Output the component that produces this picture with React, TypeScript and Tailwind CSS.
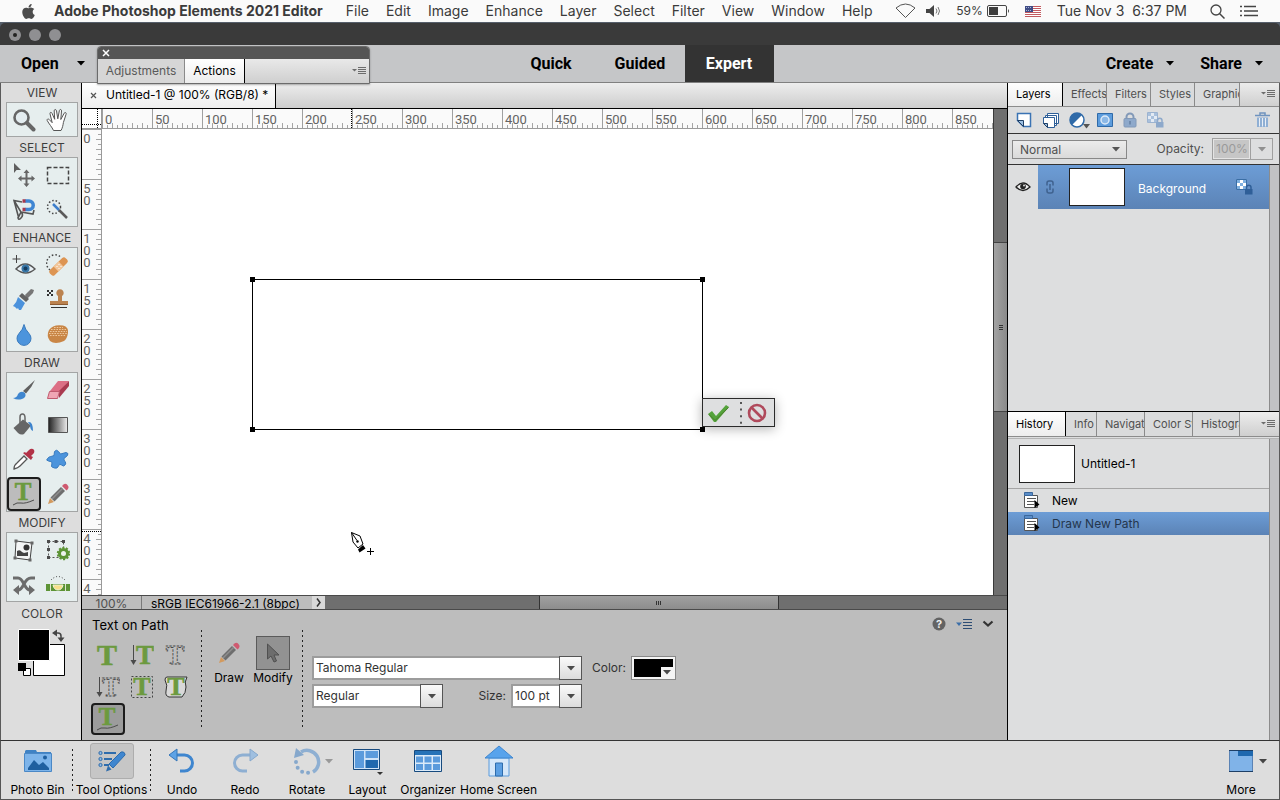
import type { ReactNode } from "react";
import { FaApple } from "react-icons/fa";

/* ---------- small shared pieces ---------- */

function Caret({ className = "text-black" }: { className?: string }) {
  return (
    <svg width="8" height="5" viewBox="0 0 8 5" className={className} aria-hidden="true">
      <path d="M0 0h8L4 4.5z" fill="currentColor" />
    </svg>
  );
}

function PanelMenuIcon({ className = "text-[#6d6d6d]" }: { className?: string }) {
  return (
    <svg width="14" height="8" viewBox="0 0 14 8" className={className} aria-hidden="true">
      <path d="M0 2h5L2.500 4.500z" fill="currentColor" />
      <path d="M6 .5h8M6 2.500h8M6 4.500h8M6 6.500h8" stroke="currentColor" />
    </svg>
  );
}

function Icon({ children, w = 24, h = 24 }: { children: ReactNode; w?: number; h?: number }) {
  return (
    <svg width={w} height={h} viewBox={`0 0 ${w} ${h}`} fill="none" aria-hidden="true">
      {children}
    </svg>
  );
}

function SerifT({ x = 12, y = 22, size = 30, outline = false }: { x?: number; y?: number; size?: number; outline?: boolean }) {
  return (
    <text
      x={x}
      y={y}
      fontSize={size}
      fontWeight="bold"
      textAnchor="middle"
      fontFamily="Liberation Serif, serif"
      fill={outline ? "none" : "#6c9a3f"}
      stroke={outline ? "#4a4a4a" : "#6c9a3f"}
      strokeWidth={outline ? 0.9 : 0.6}
      strokeDasharray={outline ? "2.500 1.200" : undefined}
    >
      T
    </text>
  );
}

const PENCIL = (
  <>
    <path d="M2 22l2-6 4 4z" fill="#d39a5e" />
    <path d="M4.500 15.500L15 5l4 4L8.500 19.500z" fill="#6e6e6e" />
    <path d="M6 17L16.500 6.500" stroke="#8e8e8e" strokeWidth="1.500" />
    <path d="M16 4l1.500-1.500q2-1.500 4 .5t.5 4L20.500 8.500z" fill="#cf5a70" />
  </>
);

const PATH_CURVE = <path d="M1 23q4-3 8-2t13-3" stroke="#4b4b4b" />;

/* ---------- toolbox ---------- */

interface Tool {
  name: string;
  icon: ReactNode;
  active?: boolean;
}

const VIEW_TOOLS: Tool[] = [
  {
    name: "Zoom",
    icon: (
      <>
        <circle cx="9.500" cy="9.500" r="7" fill="#e3ecef" stroke="#666" strokeWidth="2.600" />
        <path d="M15 15l6.500 6.500" stroke="#666" strokeWidth="4" strokeLinecap="round" />
      </>
    ),
  },
  {
    name: "Hand",
    icon: (
      <path
        d="M7.500 22.500C6 19 3 16 1.200 12.500c-.6-1.300 1-2 2-1l3 3.200L4 5.800c-.4-1.600 1.500-2 2-.5l2.700 6L8.200 2.800c0-1.700 2-1.700 2.300 0l1.300 8 1.600-8.300c.4-1.600 2.300-1.200 2.100.4l-.7 8.600 3.400-6.300c.8-1.400 2.500-.5 1.900 1l-2.700 8.300c-.4 3-1 5.500-2.400 8z"
        fill="#fff"
        stroke="#555"
      />
    ),
  },
];

const SELECT_TOOLS: Tool[] = [
  {
    name: "Move",
    icon: (
      <>
        <path d="M2 0v10l2.500-3L9 7z" fill="#5f5f5f" />
        <path
          d="M14.500 6.500l3 3.500H15.500v4.500h4V12.500L23 15.500l-3.500 3V16.500h-4v4h2l-3 3.500-3-3.500h2v-4h-4v2L6 15.500l3.500-3v2h4V10h-2z"
          fill="#666"
        />
      </>
    ),
  },
  {
    name: "Rectangular Marquee",
    icon: <path d="M1.500 4.500h21v16h-21z" stroke="#444" strokeWidth="1.500" strokeDasharray="4 2" />,
  },
  {
    name: "Lasso",
    icon: (
      <>
        <path d="M10 5L2 3.500 6.500 20 9 15l-7-11.500M9 15l12 2 1-4M9 15q3 3 0 6t-3-1" stroke="#555" strokeWidth="1.600" />
        <path d="M13 4h4a4.200 4.200 0 010 8.500h-4" stroke="#3f86d3" strokeWidth="3.500" />
        <path d="M10.500 2.200h3v3.600h-3zM10.500 10.700h3v3.600h-3z" fill="#a73a4e" />
      </>
    ),
  },
  {
    name: "Quick Selection",
    icon: (
      <>
        <circle cx="8" cy="10" r="6.500" stroke="#444" strokeWidth="1.500" strokeDasharray="1.500 2" />
        <path d="M7 7l6 6" stroke="#3f7fcb" strokeWidth="2.500" />
        <path d="M13 13l8 8" stroke="#5a5a5a" strokeWidth="2.500" />
      </>
    ),
  },
];

const ENHANCE_TOOLS: Tool[] = [
  {
    name: "Red Eye Removal",
    icon: (
      <>
        <path d="M4.500 2v8M.5 6h8" stroke="#444" />
        <path d="M4 16q9-10 19 0-9 8-19 0z" fill="#e8f0f5" stroke="#565656" strokeWidth="1.500" />
        <circle cx="13.500" cy="15.500" r="4" fill="#3777a8" />
        <circle cx="13.500" cy="15.500" r="2" fill="#163c5e" />
      </>
    ),
  },
  {
    name: "Spot Healing Brush",
    icon: (
      <>
        <path d="M4 17A7 7 0 1114 3.500" stroke="#444" strokeWidth="1.500" strokeDasharray="1.500 2" />
        <rect x="1.500" y="10" width="22" height="7" rx="2.500" transform="rotate(-44 12.500 13.500)" fill="#dd9553" />
        <rect x="9" y="10" width="7" height="7" transform="rotate(-44 12.500 13.500)" fill="#f2c69a" />
        <path d="M10.500 13.500h1M12.500 11.500h1M12.500 15.500h1M14.500 13.500h1" stroke="#fff" />
      </>
    ),
  },
  {
    name: "Smart Brush",
    icon: (
      <>
        <path d="M13 8l6-6 3 1-1 3-6 6z" fill="#777" />
        <path d="M10 6l7 6-3 3-7-6z" fill="#626262" />
        <path d="M6 10l7 6-4 7H7l-1-2-1 1-2-2-2-1q4-4 5-9z" fill="#4b92dc" />
      </>
    ),
  },
  {
    name: "Clone Stamp",
    icon: (
      <>
        <path d="M1 3h2v2H1zM5 3h2v2H5zM3 5h2v2H3zM1 7h2v2H1zM5 7h2v2H5z" fill="#333" />
        <path d="M12 9a3.700 3.700 0 114 0v5H22v4H4v-4h8z" fill="#bb8350" />
        <path d="M4 17.500h18" stroke="#8e5c33" />
        <path d="M5 20.500h16" stroke="#333" />
      </>
    ),
  },
  {
    name: "Blur",
    icon: <path d="M12 2.500q1 5 5 9a7 7 0 11-10 0q4-4 5-9z" fill="#4c94dc" stroke="#3b7bbd" />,
  },
  {
    name: "Sponge",
    icon: (
      <>
        <path d="M3 8q4-6 14-4.500 6 1.500 5 7.500-1 6-4 8-9 4-14 0-4-5-1-11z" fill="#c98646" />
        <path
          d="M5 7.500h15M4 9.500h17M3 11.500h18M4 13.500h16M8 5.500h9"
          stroke="#eec79c"
          strokeWidth="1.200"
          strokeDasharray="1.600 1.100"
        />
      </>
    ),
  },
];

const DRAW_TOOLS: Tool[] = [
  {
    name: "Brush",
    icon: (
      <>
        <path d="M23 2L11 13l3 2.500Q20 9 23 2z" fill="#616161" />
        <path d="M1 20q4 0 5-4 3-4 7-1 2 4-3 6-5 1.500-9-1z" fill="#3f86cf" />
      </>
    ),
  },
  {
    name: "Eraser",
    icon: (
      <>
        <path d="M12 3h11l-9 10H4z" fill="#dc6f85" />
        <path d="M23 3v5L13 20v-7z" fill="#a93a50" />
        <path d="M3.500 13.500h10l-2 7h-10z" fill="#f0a6b4" stroke="#c05a6e" />
      </>
    ),
  },
  {
    name: "Paint Bucket",
    icon: (
      <>
        <path d="M8 12V4q0-3 2.500-3T13 5v5" stroke="#666" strokeWidth="1.500" />
        <path d="M1.500 15L11 6.500l8 6-7 8.500q-3 1.500-6-1z" fill="#666" />
        <path d="M16 9q5-1 5 9-3-1-3-6z" fill="#3d83cd" />
      </>
    ),
  },
  {
    name: "Gradient",
    icon: (
      <>
        <defs>
          <linearGradient id="tool-gradient">
            <stop offset="0" stopColor="#222" />
            <stop offset="1" stopColor="#eee" />
          </linearGradient>
        </defs>
        <path d="M2.500 4.500h19v15h-19z" fill="url(#tool-gradient)" stroke="#555" />
      </>
    ),
  },
  {
    name: "Color Picker",
    icon: (
      <>
        <path d="M2 22q0-4 3-6l7-7 3 3-7 7q-2 2-6 3z" fill="#fff" stroke="#555" strokeWidth="1.300" />
        <path d="M11 6l8 7 2-3-2-1 3-3q1-3-1-4t-4 1l-3 3-1-1z" fill="#b23247" />
      </>
    ),
  },
  {
    name: "Custom Shape",
    icon: (
      <path
        d="M8.500 4.500q2-2.500 4 0l2 2.500 5.500-1.500q3 .5 1.500 3L18 11.500q-.5 1.500 1 3t0 3.500-3.500 0-3 1-4 2-3-1.500l.5-4q-.5-1-3.500-1.500T1.500 11.500t3-2T8 8.500z"
        fill="#4c94dc"
        stroke="#397bbf"
      />
    ),
  },
  { name: "Type", active: true, icon: <><SerifT x={11} y={18} size={25} />{PATH_CURVE}</> },
  { name: "Pencil", icon: PENCIL },
];

const MODIFY_TOOLS: Tool[] = [
  {
    name: "Crop",
    icon: (
      <>
        <path d="M4 3l16 2-2 17L3 20z" fill="#f3f5f5" stroke="#444" />
        <circle cx="14.500" cy="9.500" r="3" fill="#333" />
        <path d="M5 18v-5q3-2 5 1l2 1 4-1v4z" fill="#444" />
        <path d="M2.500 1.500h3v3h-3zM18.500 3.500h3v3h-3zM16.500 20.500h3v3h-3zM1.500 18.500h3v3h-3z" fill="#666" />
      </>
    ),
  },
  {
    name: "Recompose",
    icon: (
      <>
        <path d="M2.500 3.500h15v16h-15z" stroke="#555" strokeDasharray="2 2" />
        <path d="M1 2h3v3H1zM8.500 2h3v3h-3zM16 2h3v3h-3zM1 10h3v3H1zM1 18h3v3H1z" fill="#4b4b4b" />
        <circle cx="17.500" cy="15.500" r="5.500" stroke="#5d9436" strokeWidth="2.500" strokeDasharray="2 1.450" />
        <circle cx="17.500" cy="15.500" r="4" fill="#eef3ee" stroke="#5d9436" strokeWidth="3" />
      </>
    ),
  },
  {
    name: "Content-Aware Move",
    icon: (
      <>
        <path d="M1 6h5q3 0 6 6t6 6h1M23 6h-4q-4 0-7 6t-6 6H5" stroke="#6c6c6c" strokeWidth="3" />
        <path d="M7 13v10l-6-5zM17 13v10l6-5z" fill="#6c6c6c" />
      </>
    ),
  },
  {
    name: "Straighten",
    icon: (
      <>
        <path d="M5 8q7-7 14 0" stroke="#333" strokeDasharray="1 2" />
        <path d="M0 12h24v7H0z" fill="#5d9436" />
        <path d="M7 13h10q-1 5-5 5t-5-5z" fill="#f8df8a" stroke="#eef3d6" />
        <path d="M4.500 12v7M19.500 12v7" stroke="#dfe8cf" />
      </>
    ),
  },
];

function ToolGroup({ title, tools, className }: { title: string; tools: Tool[]; className: string }) {
  return (
    <section>
      <h2 className="h-5 w-[72px] text-center text-[12px] leading-[21px] text-[#3d3d3d]">{title}</h2>
      <div className={`grid w-[72px] auto-rows-fr grid-cols-2 border border-[#a3a5a5] bg-[#e6eeee] pr-[2px] ${className}`}>
        {tools.map((tool) => (
          <button
            key={tool.name}
            type="button"
            aria-label={tool.name}
            className={
              tool.active
                ? "flex items-center justify-center rounded-[4px] border-2 border-[#1c1c1c] bg-[#bcbcbc]"
                : "flex items-center justify-center"
            }
          >
            <Icon>{tool.icon}</Icon>
          </button>
        ))}
      </div>
    </section>
  );
}

function Toolbox() {
  return (
    <aside className="w-[82px] shrink-0 border-x border-l-[#5a5a5a] border-r-black bg-[#dddddd] pl-[5px]">
      <ToolGroup title="VIEW" tools={VIEW_TOOLS} className="h-[35px]" />
      <ToolGroup title="SELECT" tools={SELECT_TOOLS} className="h-[70px]" />
      <ToolGroup title="ENHANCE" tools={ENHANCE_TOOLS} className="h-[105px]" />
      <ToolGroup title="DRAW" tools={DRAW_TOOLS} className="h-[140px]" />
      <ToolGroup title="MODIFY" tools={MODIFY_TOOLS} className="h-[70px]" />
      <h2 className="h-6 w-[72px] text-center text-[12px] leading-[24px] text-[#3d3d3d]">COLOR</h2>
      <button type="button" aria-label="Foreground and background colors" className="ml-[11px] block pt-[2px]">
        <svg width="50" height="50" viewBox="0 0 50 50" fill="none" aria-hidden="true">
          <path d="M16.500 16.500h31v31h-31z" fill="#fff" stroke="#000" />
          <path d="M1.500 1.500h31v31h-31z" fill="#000" stroke="#fff" />
          <path d="M37 5h4q3 0 3 3v4" stroke="#444" strokeWidth="1.500" />
          <path d="M35 5l5-3.500v7zM40.500 9.500h7L44 14z" fill="#444" />
          <path d="M6.500 40.500h7v7h-7z" fill="#fff" stroke="#000" />
          <path d="M1 35h8v8H1z" fill="#000" />
        </svg>
      </button>
    </aside>
  );
}

/* ---------- menu bar and top bar ---------- */

const MENUS = ["File", "Edit", "Image", "Enhance", "Layer", "Select", "Filter", "View", "Window", "Help"];

function MenuBar() {
  return (
    <header className="flex h-[22px] shrink-0 items-center bg-[#fafafa] pr-[22px] pl-5 text-[14px] leading-[22px] text-[#3b3b3b]">
      <FaApple size={17} className="mr-[17px] text-[#4c4c4c]" />
      <span className="font-bold whitespace-nowrap">Adobe Photoshop Elements 2021 Editor</span>
      <nav className="ml-[23px] flex gap-[17px]">
        {MENUS.map((menu) => (
          <button key={menu} type="button">
            {menu}
          </button>
        ))}
      </nav>
      <div className="ml-auto flex items-center whitespace-nowrap">
        <Icon w={21} h={16}>
          <path d="M1 5q9.500-8 19 0l-9.500 9.500z" stroke="#555" />
        </Icon>
        <span className="ml-[10px] flex">
          <Icon w={14} h={14}>
            <path d="M0 5h3.500L8 1v12L3.500 9H0z" fill="#444" />
            <path d="M10 4.500q2 2.500 0 5M12 3q3 4 0 8" stroke="#777" />
          </Icon>
        </span>
        <span className="mr-[4px] ml-4 text-[12px]">59%</span>
        <Icon w={24} h={14}>
          <rect x=".5" y="1.500" width="19" height="11" rx="1.500" stroke="#444" />
          <path d="M2 3h9v8H2z" fill="#3d3d3d" />
          <path d="M21 5q2 2 0 4z" fill="#444" />
        </Icon>
        <span className="ml-[14px] flex">
          <Icon w={16} h={11}>
            <path d="M0 0h16v11H0z" fill="#fff" />
            <path d="M0 .5h16M0 2.500h16M0 4.500h16M0 6.500h16M0 8.500h16M0 10.500h16" stroke="#c25a60" />
            <path d="M0 0h8v6H0z" fill="#3f4c86" />
            <path d="M1 1.500h6M1 4.500h6" stroke="#aab0d0" strokeDasharray="1 1" />
          </Icon>
        </span>
        <span className="ml-4">Tue Nov 3&nbsp; 6:37 PM</span>
        <span className="ml-[23px] flex">
          <Icon w={15} h={15}>
            <circle cx="6" cy="6" r="5" stroke="#444" strokeWidth="1.300" />
            <path d="M9.500 9.500l5 5" stroke="#444" strokeWidth="1.500" />
          </Icon>
        </span>
        <span className="ml-[15px] flex">
          <Icon w={18} h={12}>
            <path d="M0 1.500h2M0 6h2M0 10.500h2M4 1.500h12M4 6h14M4 10.500h14" stroke="#444" strokeWidth="1.600" />
          </Icon>
        </span>
      </div>
    </header>
  );
}

const PANEL_TAB_ACTIVE = "border-r border-black bg-gradient-to-b from-white to-[#ededed] text-black";

function FloatingPanel() {
  return (
    <div className="absolute top-[1px] left-[97px] z-20 w-[273px] rounded-t-[4px] border border-[#6b6b6b] bg-[#dcdcdc] text-[12px] shadow-[0_1px_2px_rgba(0,0,0,0.3)]">
      <div className="flex h-[12px] items-center rounded-t-[3px] bg-[#555555] pl-[4px]">
        <button type="button" aria-label="Close panel">
          <Icon w={8} h={8}>
            <path d="M1 1l6 6M7 1L1 7" stroke="#fff" strokeWidth="1.500" />
          </Icon>
        </button>
      </div>
      <div className="flex h-6 items-stretch bg-gradient-to-b from-[#e9e9e9] to-[#cfcfcf]">
        <button type="button" className="w-[87px] border-r border-[#8a8a8a] bg-[#d6d6d6] text-[#5a5a5a]">
          Adjustments
        </button>
        <button type="button" className={`w-[60px] ${PANEL_TAB_ACTIVE}`}>
          Actions
        </button>
        <button type="button" aria-label="Panel menu" className="mr-[3px] ml-auto">
          <PanelMenuIcon />
        </button>
      </div>
    </div>
  );
}

function TopBar() {
  return (
    <div className="relative z-10 grid h-[37px] shrink-0 grid-cols-[1fr_auto_1fr] bg-[#c5c6c8] font-[Roboto,sans-serif] text-[16px] font-bold text-black shadow-[0_1px_0_#808080]">
      <div className="flex items-center pl-[21px]">
        <button type="button" className="flex items-center gap-[18px]">
          Open <Caret />
        </button>
      </div>
      <nav className="flex">
        <button type="button" className="w-[89px]">
          Quick
        </button>
        <button type="button" className="w-[89px]">
          Guided
        </button>
        <button type="button" className="w-[89px] bg-[#333333] text-white">
          Expert
        </button>
      </nav>
      <div className="flex items-center justify-end gap-[26px] pr-[17px]">
        <button type="button" className="flex items-center gap-[13px]">
          Create <Caret />
        </button>
        <button type="button" className="flex items-center gap-[13px]">
          Share <Caret />
        </button>
      </div>
      <div className="absolute font-[Inter,sans-serif] font-normal">
        <FloatingPanel />
      </div>
    </div>
  );
}

/* ---------- document window ---------- */

const H_MARKS = Array.from({ length: 18 }, (_, i) => i * 50);
const V_MARKS = Array.from({ length: 10 }, (_, i) => i * 50);
const MINOR = Array.from({ length: 9 }, (_, i) => i);

function HorizontalRuler() {
  return (
    <div className="relative flex h-5 flex-1 overflow-hidden border-b border-[#9a9a9a] bg-[#fafafa]">
      {H_MARKS.map((mark) => (
        <div key={mark} className="relative flex w-[50px] shrink-0 items-end border-l border-[#a0a0a0]">
          <div className="flex pl-1">
            {MINOR.map((n) => (
              <i key={n} className={n % 2 ? "mr-1 h-[5px] w-px self-end bg-[#a5a5a5]" : "mr-1 h-[3px] w-px self-end bg-[#a5a5a5]"} />
            ))}
          </div>
          <span className="absolute top-[2px] left-[2px] font-[Roboto,sans-serif] text-[13px] leading-[17px] text-[#636363]">
            {mark}
          </span>
        </div>
      ))}
      <i className="absolute top-0 left-[249px] h-full border-l border-dotted border-black" />
    </div>
  );
}

function VerticalRuler() {
  return (
    <div className="relative w-5 shrink-0 overflow-hidden border-r border-[#9a9a9a] bg-[#fafafa]">
      {V_MARKS.map((mark) => (
        <div key={mark} className="flex h-[50px] justify-between border-t border-[#a0a0a0]">
          <span className="w-[10px] pt-[3px] text-center font-[Roboto,sans-serif] text-[13px] leading-[12px] text-[#636363]">
            {String(mark).split("").map((digit, i) => (
              <b key={i} className="block font-normal">
                {digit}
              </b>
            ))}
          </span>
          <span className="flex flex-col items-end pt-1">
            {MINOR.map((n) => (
              <i key={n} className={n % 2 ? "mb-1 h-px w-[5px] bg-[#a5a5a5]" : "mb-1 h-px w-[3px] bg-[#a5a5a5]"} />
            ))}
          </span>
        </div>
      ))}
      <i className="absolute top-[402px] left-0 w-full border-t border-dotted border-black" />
    </div>
  );
}

function Canvas() {
  return (
    <div className="relative flex-1 overflow-hidden bg-white">
      {/* path being edited */}
      <div className="absolute top-[150px] left-[150px] h-[151px] w-[451px] border border-black">
        <i className="absolute -top-[3px] -left-[3px] size-[5px] bg-black" />
        <i className="absolute -top-[3px] -right-[3px] size-[5px] bg-black" />
        <i className="absolute -bottom-[3px] -left-[3px] size-[5px] bg-black" />
        <i className="absolute -right-[3px] -bottom-[3px] size-[5px] bg-black" />
      </div>
      {/* commit / cancel */}
      <div className="absolute top-[269px] left-[600px] flex h-[29px] w-[73px] items-center justify-between border border-[#2b2b2b] bg-[#dedfe0] px-[5px] shadow-[0_2px_12px_rgba(0,0,0,0.3)]">
        <button type="button" aria-label="Commit" className="mr-[5px]">
          <Icon w={21} h={18}>
            <path d="M0 10l4-3 4 5L18 1l3 2L8 18H6z" fill="#54a33b" />
            <path d="M1 10.500l6 6L20.500 3.500" stroke="#4a7d2b" />
          </Icon>
        </button>
        <Icon w={2} h={22}>
          <path d="M1 0v22" stroke="#555" strokeWidth="2" strokeDasharray="2 4.600" />
        </Icon>
        <button type="button" aria-label="Cancel" className="mr-[2px]">
          <Icon w={20} h={20}>
            <circle cx="10" cy="10" r="8" stroke="#b04a5c" strokeWidth="2.600" />
            <path d="M4.500 4.500l11 11" stroke="#b04a5c" strokeWidth="2.600" />
          </Icon>
        </button>
      </div>
      {/* pen cursor */}
      <svg className="absolute top-[402px] left-[248px]" width="26" height="25" viewBox="0 0 26 25" fill="none" aria-hidden="true">
        <path d="M1.500 1.500L3 11l5 6 5-4-3-8z" fill="#fff" stroke="#000" />
        <path d="M1.500 1.500l5.500 8" stroke="#000" />
        <circle cx="7.500" cy="10.500" r="1.200" fill="#000" />
        <path d="M8 18.500l5-4.500 2.500 3.500-6 4z" fill="#000" />
        <path d="M17 20.500h7M20.500 17v7" stroke="#000" />
      </svg>
    </div>
  );
}

function StatusBar() {
  return (
    <div className="flex h-[15px] shrink-0 overflow-hidden border-y border-[#4a4a4a] bg-[#6f6f6f] text-[12px] leading-[16px] text-black">
      <div className="w-[60px] border-r border-[#7a7a7a] bg-[#bdbdbd] text-center text-[#505050]">100%</div>
      <div className="w-[170px] bg-[#bdbdbd] pl-[9px] whitespace-nowrap">sRGB IEC61966-2.1 (8bpc)</div>
      <button type="button" aria-label="Document info" className="flex w-[13px] items-center justify-center bg-[#d9d9d9]">
        <Icon w={5} h={9}>
          <path d="M1 .5l3 4-3 4" stroke="#333" strokeWidth="1.500" />
        </Icon>
      </button>
      <div className="mr-[14px] flex flex-1">
        <div className="ml-[32%] flex w-[36%] items-center justify-center border-x border-[#333333] bg-gradient-to-b from-[#a0a0a0] to-[#8d8d8d]">
          <Icon w={5} h={4}>
            <path d="M.5 0v4M2.500 0v4M4.500 0v4" stroke="#333" />
          </Icon>
        </div>
      </div>
    </div>
  );
}

function DocumentWindow() {
  return (
    <>
      <div className="flex h-[27px] shrink-0 border-b border-black bg-gradient-to-b from-[#efefef] to-[#cdcdcd]">
        <div className="flex w-[194px] items-center gap-[9px] border-r border-black bg-gradient-to-b from-white to-[#efefef] pl-2 text-[12px] whitespace-nowrap text-black">
          <button type="button" aria-label="Close document">
            <Icon w={7} h={7}>
              <path d="M1 1l5 5M6 1L1 6" stroke="#555" strokeWidth="1.200" />
            </Icon>
          </button>
          Untitled-1 @ 100% (RGB/8) *
        </div>
      </div>
      <div className="flex min-h-0 flex-1">
        <div className="flex min-w-0 flex-1 flex-col">
          <div className="flex shrink-0">
            <div className="relative h-5 w-5 border-r border-b border-[#9a9a9a] bg-white">
              <i className="absolute top-0 left-[15px] h-full border-l border-dotted border-black" />
              <i className="absolute top-[15px] left-0 w-full border-t border-dotted border-black" />
            </div>
            <HorizontalRuler />
          </div>
          <div className="flex min-h-0 flex-1">
            <VerticalRuler />
            <Canvas />
          </div>
        </div>
        {/* vertical scroll bar */}
        <div className="flex w-[14px] shrink-0 flex-col border-l border-[#3a3a3a] bg-[#6f6f6f] pt-[133px]">
          <div className="flex h-[170px] items-center justify-center border-y border-[#444444] bg-gradient-to-r from-[#a3a3a3] to-[#8a8a8a]">
            <Icon w={4} h={5}>
              <path d="M0 .5h4M0 2.500h4M0 4.500h4" stroke="#333" />
            </Icon>
          </div>
        </div>
      </div>
      <StatusBar />
    </>
  );
}

/* ---------- tool options ---------- */

const DOWN_ARROW = (
  <>
    <path d="M3.500 2v19" stroke="#4a4a4a" />
    <path d="M.5 17h6l-3 5z" fill="#4a4a4a" />
  </>
);

const TYPE_TOOLS: Tool[] = [
  { name: "Horizontal Type", icon: <SerifT x={11} /> },
  { name: "Vertical Type", icon: <><SerifT x={15} y={21} size={27} />{DOWN_ARROW}</> },
  { name: "Horizontal Type Mask", icon: <SerifT x={11} y={21} size={28} outline /> },
  { name: "Vertical Type Mask", icon: <><SerifT x={15} y={21} size={27} outline />{DOWN_ARROW}</> },
  {
    name: "Text on Selection",
    icon: (
      <>
        <path d="M1.500 1.500h21v21h-21z" stroke="#444" strokeDasharray="2 2" />
        <SerifT y={20} size={26} />
      </>
    ),
  },
  {
    name: "Text on Shape",
    icon: (
      <>
        <path d="M3 2h20q-3 5-1 10 0 6-4 10H5q-4-1-3-6 2-6-1-11 0-3 2-3z" fill="#d9d9d9" stroke="#333" />
        <SerifT y={20} size={26} />
      </>
    ),
  },
  { name: "Text on Path", active: true, icon: <><SerifT x={11} y={18} size={25} />{PATH_CURVE}</> },
];

function DottedDivider({ className = "h-[100px]" }: { className?: string }) {
  return (
    <div className={`w-px shrink-0 bg-[repeating-linear-gradient(180deg,#222222_0px,#222222_2px,transparent_2px,transparent_5px)] ${className}`} />
  );
}

function DropDown({ id, value, className }: { id: string; value: string; className: string }) {
  return (
    <span className={`relative flex h-6 border-2 border-[#9c9c9c] bg-white ${className}`}>
      <select id={id} aria-label={id} className="w-full appearance-none bg-transparent pl-[2px] text-[12px] text-[#333333]">
        <option>{value}</option>
      </select>
      <span className="pointer-events-none absolute -top-[2px] -right-[2px] flex h-6 w-[23px] items-center justify-center border border-[#555555] bg-gradient-to-b from-[#fafafa] to-[#dcdcdc]">
        <Caret className="text-[#4a4a4a]" />
      </span>
    </span>
  );
}

function ToolOptions() {
  return (
    <section className="flex h-[130px] shrink-0 bg-[#bdbdbd] text-[12px] text-black">
      <div className="w-[119px] pl-[9px]">
        <h3 className="h-[29px] pl-px text-[13px] leading-[31px]">Text on Path</h3>
        <div className="grid auto-rows-[32px] grid-cols-[34px_34px_34px]">
          {TYPE_TOOLS.map((tool) => (
            <button
              key={tool.name}
              type="button"
              aria-label={tool.name}
              className={
                tool.active
                  ? "flex items-center justify-center rounded-[4px] border-2 border-[#1c1c1c] bg-[#9c9c9c]"
                  : "flex items-center justify-center"
              }
            >
              <Icon>{tool.icon}</Icon>
            </button>
          ))}
        </div>
      </div>
      <div className="flex gap-[5px] pt-5">
        <DottedDivider />
        <div className="flex w-[90px] pt-[6px] leading-4">
          <button type="button" className="flex w-11 flex-col items-center">
            <span className="flex h-[34px] w-[34px] items-center justify-center">
              <Icon>{PENCIL}</Icon>
            </span>
            Draw
          </button>
          <button type="button" className="flex w-11 flex-col items-center">
            <span className="flex h-[34px] w-[34px] items-center justify-center border border-[#5a5a5a] bg-[#929292]">
              <Icon w={14} h={20}>
                <path d="M1.500 1v15l3.500-3 3 6 2.500-1-2.500-6h5z" fill="#6d6d6d" stroke="#505050" />
              </Icon>
            </span>
            Modify
          </button>
        </div>
        <DottedDivider />
      </div>
      <div className="flex flex-col gap-1 pt-[46px] pl-[9px]">
        <div className="flex items-center">
          <DropDown id="Font family" value="Tahoma Regular" className="w-[270px]" />
          <label htmlFor="text-color" className="w-[49px] pl-[10px] text-[#333333]">
            Color:
          </label>
          <button
            id="text-color"
            type="button"
            className="flex h-6 w-[45px] items-end justify-end border border-[#888888] bg-black p-[2px] shadow-[inset_0_0_0_2px_#f4f4f4]"
          >
            <span className="flex h-[10px] w-[12px] items-center justify-center bg-[#f4f4f4]">
              <Caret className="text-[#4a4a4a]" />
            </span>
          </button>
        </div>
        <div className="flex items-center">
          <DropDown id="Font style" value="Regular" className="w-[131px]" />
          <label htmlFor="Size" className="w-[68px] pr-[5px] text-right text-[#333333]">
            Size:
          </label>
          <DropDown id="Size" value="100 pt" className="w-[71px]" />
        </div>
      </div>
      <div className="ml-auto flex h-[28px] items-center gap-[10px] pr-[13px]">
        <button type="button" aria-label="Help">
          <svg width="14" height="14" viewBox="0 0 14 14" aria-hidden="true">
            <circle cx="7" cy="7" r="6.500" fill="#636363" />
            <text x="7" y="11" textAnchor="middle" fontSize="11" fontWeight="bold" fill="#eee" fontFamily="Inter, sans-serif">
              ?
            </text>
          </svg>
        </button>
        <button type="button" aria-label="Options menu">
          <Icon w={16} h={11}>
            <path d="M0 3.500h6L3 7z" fill="#3b6ea8" />
            <path d="M7 .5h9M7 3.500h9M7 6.500h9M7 9.500h9" stroke="#2d4d74" />
          </Icon>
        </button>
        <button type="button" aria-label="Collapse">
          <Icon w={12} h={8}>
            <path d="M1.500 1.500L6 5.500l4.500-4" stroke="#333" strokeWidth="2.200" />
          </Icon>
        </button>
      </div>
    </section>
  );
}

/* ---------- right-hand panels ---------- */

const TAB_BASE = "overflow-hidden border-r text-left whitespace-nowrap pl-2";

function PanelTabs({ tabs, className }: { tabs: string[]; className: string }) {
  return (
    <div className={`grid h-[25px] shrink-0 border-b border-[#8c8c8c] bg-gradient-to-b from-[#ededed] to-[#cfcfcf] text-[11px] ${className}`}>
      {tabs.map((tab, i) => (
        <button
          key={tab}
          type="button"
          className={i === 0 ? `${TAB_BASE} ${PANEL_TAB_ACTIVE}` : `${TAB_BASE} border-[#8a8a8a] bg-[#dadbdc] text-[#4f4f4f]`}
        >
          {tab}
        </button>
      ))}
      <button type="button" aria-label="Panel menu" className="mr-1 flex items-center justify-self-end">
        <PanelMenuIcon />
      </button>
    </div>
  );
}

const LOCK = (
  <>
    <path d="M3.500 7V5a3.500 3.500 0 017 0v2" stroke="#8299b8" strokeWidth="2" />
    <rect x="1" y="6.500" width="12" height="8.500" rx="1" fill="#8ea9cb" stroke="#8299b8" />
    <path d="M7 9v3.500" stroke="#6580a3" strokeWidth="1.500" />
  </>
);

function CheckerLock({ dark = false }: { dark?: boolean }) {
  const fill = dark ? "#3a6ea5" : "#9cb3d0";
  const bodyFill = dark ? "#2f5f98" : "#8ea9cb";
  return (
    <Icon w={17} h={16}>
      <path d="M.5.5h10v10H.5z" fill={dark ? "#fff" : "#e3eaf3"} stroke={fill} />
      <path d="M1 1h3v3H1zM7 1h3v3H7zM4 4h3v3H4zM1 7h3v3H1zM7 7h3v3H7z" fill={dark ? "#7fb0e0" : "#a9c0dc"} />
      <path d="M10.500 10V8.500a2.200 2.200 0 014.500 0V10" stroke={bodyFill} strokeWidth="1.500" />
      <rect x="9" y="10" width="7.500" height="5.500" fill={bodyFill} />
    </Icon>
  );
}

const LAYER_ACTIONS: { name: string; icon: ReactNode }[] = [
  {
    name: "New layer",
    icon: (
      <Icon w={16} h={16}>
        <path d="M1.500 1.500h13v13h-7l-6-6z" fill="#fff" stroke="#3b73b4" strokeWidth="1.500" />
        <path d="M1.500 8.500l6 6v-6z" fill="#9cbfe2" stroke="#1f3f66" />
      </Icon>
    ),
  },
  {
    name: "New group",
    icon: (
      <Icon w={17} h={16}>
        <path d="M5.500 1.500h11v10h-11zM3.500 3.500h11v10h-11z" fill="#fff" stroke="#2f5f98" />
        <path d="M1.500 5.500h11v10h-7l-4-4z" fill="#fff" stroke="#2f5f98" />
        <path d="M1.500 11.500l4 4v-4z" fill="#9cbfe2" stroke="#1f3f66" />
      </Icon>
    ),
  },
  {
    name: "Adjustment layer",
    icon: (
      <Icon w={21} h={17}>
        <circle cx="8" cy="8" r="7" fill="#fff" stroke="#2f6aa8" strokeWidth="1.500" />
        <path d="M13 3A7 7 0 003 13z" fill="#2f6aa8" />
        <path d="M14 12h7l-3.500 4.500z" fill="#555" />
      </Icon>
    ),
  },
  {
    name: "Add mask",
    icon: (
      <Icon w={16} h={14}>
        <path d="M.5.5h15v13H.5z" fill="#5c9cdd" stroke="#2f6aa8" />
        <circle cx="8" cy="7" r="4" fill="#8bb8e6" stroke="#dceaf8" strokeWidth="1.500" />
      </Icon>
    ),
  },
  { name: "Lock all", icon: <Icon w={14} h={16}>{LOCK}</Icon> },
  { name: "Lock transparency", icon: <CheckerLock /> },
];

function LayersPanel() {
  return (
    <section className="flex h-[330px] shrink-0 flex-col border-b border-black">
      <PanelTabs tabs={["Layers", "Effects", "Filters", "Styles", "Graphics"]} className="grid-cols-[55px_44px_44px_44px_45px_1fr]" />
      <div className="flex h-[27px] shrink-0 items-center gap-[10px] border-b border-[#333333] pr-[9px] pl-2">
        {LAYER_ACTIONS.map((action) => (
          <button key={action.name} type="button" aria-label={action.name} className={action.name === "Add mask" ? "-ml-[3px]" : undefined}>
            {action.icon}
          </button>
        ))}
        <button type="button" aria-label="Delete layer" className="ml-auto">
          <Icon w={15} h={16}>
            <path d="M0 3.500h15M5 3V1h5v2" stroke="#6f93bf" strokeWidth="1.500" />
            <path d="M2 5.500h11V15H2z" fill="#8fafd4" />
            <path d="M4.500 6v8.500M7.500 6v8.500M10.500 6v8.500" stroke="#e8eef6" />
          </Icon>
        </button>
      </div>
      <div className="flex h-[31px] shrink-0 items-center border-b border-[#333333] pl-1 text-[12px] text-[#505050]">
        <span className="relative flex h-[19px] w-[115px] border border-[#888888] bg-gradient-to-b from-[#ececec] to-[#dadada]">
          <select aria-label="Blending mode" className="w-full appearance-none pl-[7px] text-[12px]">
            <option>Normal</option>
          </select>
          <span className="pointer-events-none absolute top-[6px] right-[6px] flex">
            <Caret className="text-[#555555]" />
          </span>
        </span>
        <label htmlFor="opacity" className="mr-2 ml-auto">
          Opacity:
        </label>
        <span className="mr-[6px] flex h-[22px] w-[61px] border border-[#a0a0a0]">
          <input id="opacity" defaultValue="100%" className="w-[37px] border border-[#e4e4e4] bg-[#c6c6c6] pl-[2px] text-[12px] text-[#9a9a9a]" />
          <button type="button" aria-label="Opacity slider" className="flex flex-1 items-center justify-center border-l border-[#a0a0a0]">
            <Caret className="text-[#909090]" />
          </button>
        </span>
      </div>
      <div className="flex flex-1">
        <div className="flex-1">
          <div className="flex h-[44px]">
            <button type="button" aria-label="Toggle visibility" className="flex w-[30px] items-center justify-center">
              <Icon w={16} h={12}>
                <path d="M1 6q7-8 14 0-7 7-14 0z" fill="#eee" stroke="#222" strokeWidth="1.300" />
                <circle cx="8" cy="5.500" r="2.800" fill="#222" />
                <circle cx="9" cy="4.500" r="1" fill="#ddd" />
              </Icon>
            </button>
            <div className="flex flex-1 items-center bg-gradient-to-b from-[#6d9dd6] to-[#5b83b6] pl-[8px]">
              <Icon w={8} h={14}>
                <path d="M1 5.500V3a2 2 0 012-2h2a2 2 0 012 2v2.500M1 8.500V11a2 2 0 002 2h2a2 2 0 002-2V8.500M4 4v6" stroke="#3f628f" strokeWidth="1.500" />
              </Icon>
              <span className="ml-[15px] h-[38px] w-[56px] border border-[#222222] bg-white" />
              <span className="ml-[13px] pt-1 text-[12px] text-white">Background</span>
              <span className="mr-4 ml-auto">
                <CheckerLock dark />
              </span>
            </div>
          </div>
        </div>
        <div className="w-[10px] border-l border-[#8c8c8c] bg-[#c1c2c4]" />
      </div>
    </section>
  );
}

function HistoryIcon() {
  return (
    <Icon w={16} h={17}>
      <path d="M.5 3.500h13v12H.5z" fill="#fff" stroke="#555" />
      <path d="M.5.5h8v3h-8z" fill="#5a8dc8" stroke="#3a679c" />
      <path d="M3 6.500h9M3 9.500h8M3 12.500h7" stroke="#555" />
      <path d="M10.500 8v8l5-3.500z" fill="#000" />
    </Icon>
  );
}

function HistoryPanel() {
  return (
    <section className="flex flex-1 flex-col">
      <PanelTabs tabs={["History", "Info", "Navigator", "Color Swatches", "Histogram"]} className="grid-cols-[58px_31px_48px_48px_47px_1fr]" />
      <div className="mt-px flex flex-1 border-t border-[#b5b5b5] text-[12px] text-black">
        <div className="flex-1">
          <div className="flex h-[50px] items-center gap-[6px] border-b border-[#a5a5a5] pl-[11px]">
            <span className="h-[38px] w-[56px] border border-[#222222] bg-white" />
            Untitled-1
          </div>
          <ul>
            <li className="flex h-[23px] items-center gap-[12px] pl-4">
              <HistoryIcon />
              New
            </li>
            <li className="flex h-[23px] items-center gap-[12px] bg-gradient-to-b from-[#6d9dd6] to-[#5b83b6] pl-4 text-[#24364d]">
              <HistoryIcon />
              Draw New Path
            </li>
          </ul>
        </div>
        <div className="w-[10px] border-l border-[#8c8c8c] bg-[#c1c2c4]" />
      </div>
    </section>
  );
}

/* ---------- task bar ---------- */

function TaskButton({ label, className, children }: { label: string; className: string; children: ReactNode }) {
  return (
    <button type="button" className={`flex flex-col items-center whitespace-nowrap ${className}`}>
      <span className="flex h-10 items-center justify-center">{children}</span>
      <span className="leading-[18px]">{label}</span>
    </button>
  );
}

function TaskBar() {
  return (
    <footer className="flex h-[60px] shrink-0 border border-[#555555] border-t-[#333333] bg-[#dddddd] text-[12px] text-black">
      <TaskButton label="Photo Bin" className="w-[71px] pl-[2px]">
        <Icon w={28} h={24}>
          <path d="M1 2l1-1h10l1 2h14v20H1z" fill="#3f82c4" />
          <path d="M.5 4.500h27v18H.5z" fill="#7db4ea" stroke="#4a88c6" />
          <path d="M4 19l6-8 5 5 4-3 6 6v2H4z" fill="#1f5f9f" />
          <circle cx="21" cy="8.500" r="2" fill="#1f5f9f" />
        </Icon>
      </TaskButton>
      <DottedDivider className="mt-2 h-[44px]" />
      <TaskButton label="Tool Options" className="w-[77px]">
        <span className="flex h-[36px] w-[44px] items-center justify-center rounded-[3px] border border-[#adadad] bg-[#c6c6c6]">
          <Icon w={28} h={22}>
            <path d="M6 3h12M6 9h8M6 15h5" stroke="#2e6cac" strokeWidth="2" />
            <circle cx="2.500" cy="3" r="1.600" fill="#8fb9e3" stroke="#2e6cac" />
            <circle cx="2.500" cy="9" r="1.600" fill="#8fb9e3" stroke="#2e6cac" />
            <circle cx="2.500" cy="15" r="1.600" fill="#8fb9e3" stroke="#2e6cac" />
            <path d="M8 21.500l2-6 3.500 4z" fill="#2e6cac" />
            <path d="M11 14L23 2q3-1 4 2v1L15 18z" fill="#3f86cf" stroke="#2e6cac" />
          </Icon>
        </span>
      </TaskButton>
      <DottedDivider className="mt-2 h-[44px]" />
      <TaskButton label="Undo" className="w-[62px]">
        <Icon w={26} h={26}>
          <path d="M6 7h9.500a8 8 0 010 16H11" stroke="#3f86cf" strokeWidth="3" />
          <path d="M0 7l8-6v12z" fill="#5ea3e6" stroke="#3576b8" />
        </Icon>
      </TaskButton>
      <TaskButton label="Redo" className="w-[64px]">
        <Icon w={26} h={26}>
          <path d="M20 7h-9.500a8 8 0 000 16H15" stroke="#8eafd2" strokeWidth="3" />
          <path d="M26 7l-8-6v12z" fill="#9fbfe0" stroke="#86a8cc" />
        </Icon>
      </TaskButton>
      <TaskButton label="Rotate" className="relative w-[60px]">
        <Icon w={28} h={28}>
          <path d="M8 5a11 11 0 0112 20" stroke="#8eafd2" strokeWidth="3.500" />
          <path d="M1 11l2-10 8 7z" fill="#86a8cc" />
          <path d="M3 15a11 11 0 0014 10.500" stroke="#86a8cc" strokeWidth="4" strokeLinecap="round" strokeDasharray="0 6" />
        </Icon>
        <span className="absolute top-[18px] right-[4px] flex">
          <Caret className="text-[#999999]" />
        </span>
      </TaskButton>
      <TaskButton label="Layout" className="w-[61px]">
        <Icon w={30} h={28}>
          <path d="M.5 2.500h26v20H.5z" fill="#cfe3f7" stroke="#174a7e" />
          <path d="M2 4h9v17H2z" fill="#5b9bdc" />
          <path d="M12.500 4H25v7H12.500z" fill="#5b9bdc" />
          <path d="M12.500 13H25v8H12.500z" fill="#1f68ae" />
          <path d="M24 25h6l-3 3z" fill="#333" />
        </Icon>
      </TaskButton>
      <TaskButton label="Organizer" className="w-[60px]">
        <Icon w={28} h={22}>
          <path d="M.5.500h27v21H.5z" fill="#dcebf9" stroke="#174a7e" />
          <path d="M1 1h26v4H1z" fill="#2673b8" />
          <path d="M2 6.500h7v6H2zM10.500 6.500h7v6h-7zM19 6.500h7v6h-7zM2 14h7v6H2zM10.500 14h7v6h-7zM19 14h7v6h-7z" fill="#5b9bdc" />
        </Icon>
      </TaskButton>
      <TaskButton label="Home Screen" className="w-[81px]">
        <Icon w={30} h={32}>
          <path d="M5 13h20v18H5z" fill="#d5e7f9" stroke="#5a9bdc" />
          <path d="M15 1l14 12H1z" fill="#58a3ec" stroke="#3f86cf" />
          <path d="M11.500 18h7v13h-7z" fill="#5b9fe3" stroke="#2e6cac" />
        </Icon>
      </TaskButton>
      <TaskButton label="More" className="relative ml-auto w-[76px]">
        <Icon w={24} h={22}>
          <path d="M.5.5h23v21H.5z" fill="#80b3e8" stroke="#5a83b5" />
          <path d="M9 1h15v5H9z" fill="#1f68ae" />
          <path d="M0 .5h24M0 21.500h24" stroke="#1d3f66" />
        </Icon>
        <span className="absolute top-[18px] right-[12px] flex">
          <Caret className="text-[#444444]" />
        </span>
      </TaskButton>
    </footer>
  );
}

export default function App() {
  return (
    <div className="flex h-screen flex-col bg-[#565f6b] font-[Inter,sans-serif]">
      <MenuBar />
      <div className="mt-px flex h-[22px] shrink-0 items-center gap-2 rounded-t-[5px] bg-[#3a3a3a] pt-[2px] pl-[9px]">
        <button type="button" aria-label="Close window" className="flex size-3 items-center justify-center rounded-full bg-[#8f8f92]">
          <i className="size-1 rounded-full bg-[#222222]" />
        </button>
        <button type="button" aria-label="Minimize window" className="size-3 rounded-full bg-[#8f8f92]" />
        <button type="button" aria-label="Maximize window" className="size-3 rounded-full bg-[#8f8f92]" />
      </div>
      <TopBar />
      <main className="flex min-h-0 flex-1">
        <Toolbox />
        <div className="flex min-w-0 flex-1 flex-col">
          <DocumentWindow />
          <ToolOptions />
        </div>
        <div className="flex w-[273px] shrink-0 flex-col border-x border-l-black border-r-[#5a5a5a] bg-[#dddedf]">
          <LayersPanel />
          <HistoryPanel />
        </div>
      </main>
      <TaskBar />
    </div>
  );
}
